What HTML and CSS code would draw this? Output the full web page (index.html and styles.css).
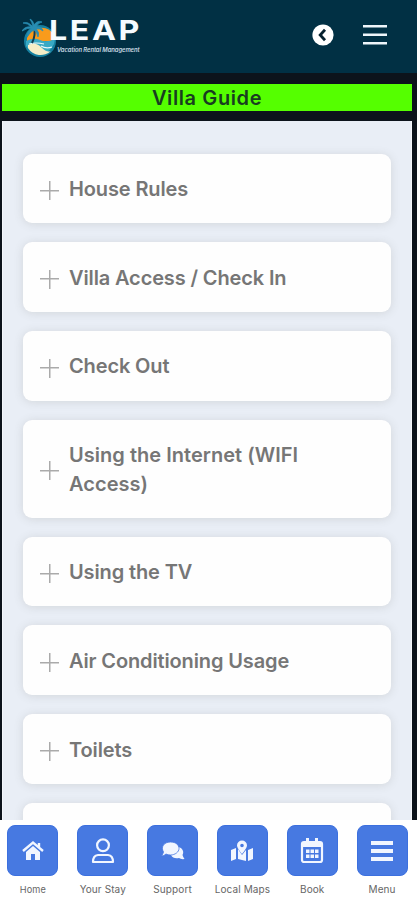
FILE: index.html
```html
<!DOCTYPE html>
<html lang="en">
<head>
<meta charset="utf-8">
<meta name="viewport" content="width=device-width, initial-scale=1">
<title>Villa Guide</title>
<link rel="stylesheet" href="styles.css">
</head>
<body>
<div class="app">
  <header class="header">
    <div class="brand">
      <svg class="emblem" viewBox="0 0 34 42" aria-hidden="true">
        <circle cx="18" cy="24" r="16" fill="#1680a0"/>
        <path d="M5 21A15 15 0 0 1 32 18V24H5Z" fill="#f99b1c"/>
        <path d="M4 24Q12 20 18 23T33 22A15.500 15.500 0 0 1 4 29Z" fill="#38a9c4"/>
        <path d="M6 28Q13 24 19 30T29 34A15 15 0 0 1 6 31Z" fill="#f5edc7"/>
        <path d="M7 27Q14 25 22 27M19 29Q24 32 30 30" fill="none" stroke="#e8f8fa" stroke-width="1.200"/>
        <path d="M12 10Q14 18 10 26" fill="none" stroke="#123d50" stroke-width="2"/>
        <path d="M11 10Q6 4 1 6Q6 6 9 10Q3 9 0 14Q6 10 10 12Q5 14 5 20Q9 14 12 13Q15 15 16 20Q18 15 14 12Q18 11 21 14Q20 9 14 10Q17 5 20 5Q15 3 12 8Q11 3 8 2Q10 5 11 10Z" fill="#288db3" stroke="#288db3" stroke-width=".8"/>
      </svg>
      <div class="wordmark"><div class="name">LEAP</div><div class="tagline">Vacation Rental Management</div></div>
    </div>
    <div class="actions">
      <svg width="22" height="22" viewBox="0 0 22 22"><circle cx="11" cy="11" r="10.600" fill="#fff"/><path d="M13 5.800L8.200 11L13 16.200" fill="none" stroke="#06212f" stroke-width="2.800"/></svg>
      <svg width="26" height="22" viewBox="0 0 26 22"><path d="M1 2.200H25M1 10.700H25M1 19.200H25" stroke="#eef5fa" stroke-width="2.400"/></svg>
    </div>
  </header>
  <main class="frame">
    <h1 class="title">Villa Guide</h1>
    <div class="list">
      <div class="card"><i class="plus"></i><span class="text">House Rules</span></div>
      <div class="card"><i class="plus"></i><span class="text">Villa Access / Check In</span></div>
      <div class="card"><i class="plus"></i><span class="text">Check Out</span></div>
      <div class="card"><i class="plus"></i><span class="text wide">Using the Internet (WIFI<br>Access)</span></div>
      <div class="card"><i class="plus"></i><span class="text">Using the TV</span></div>
      <div class="card"><i class="plus"></i><span class="text">Air Conditioning Usage</span></div>
      <div class="card"><i class="plus"></i><span class="text">Toilets</span></div>
      <div class="card"></div>
    </div>
  </main>
  <nav class="nav">
    <a class="item"><span class="tile"><svg width="24" height="24" viewBox="0 0 24 24"><path d="M2 12L12 3.500L22 12M18 4V9" fill="none" stroke="#f1f6ff" stroke-width="2.400"/><path d="M12 7L19 13V21H14V15H10V21H5V13Z" fill="#f1f6ff"/></svg></span><span class="label small">Home</span></a>
    <a class="item"><span class="tile"><svg width="24" height="28" viewBox="0 0 24 28"><circle cx="12" cy="8.300" r="5.900" fill="none" stroke="#f1f6ff" stroke-width="2.200"/><path d="M7 18H17Q22 18.500 22 25H2Q2 18.500 7 18Z" fill="none" stroke="#f1f6ff" stroke-width="2.200" stroke-linejoin="round"/></svg></span><span class="label">Your Stay</span></a>
    <a class="item"><span class="tile"><svg width="24" height="24" viewBox="0 0 24 24"><path d="M14 8C20 7 24 12 21.500 16Q22 18 23.500 20Q20 20.500 18 19Q12 20 10 16Z" fill="#f1f6ff"/><path d="M9.500 3C15 3 18 6 18 9.500S14 16 9.500 16Q7 16 5 15Q3 17 .5 17Q2 15 2.500 13C-.5 8 3 3 9.500 3Z" fill="#f1f6ff" stroke="#4779e1" stroke-width=".8"/></svg></span><span class="label">Support</span></a>
    <a class="item"><span class="tile"><svg width="24" height="24" viewBox="0 0 24 24"><path d="M1 11L6 9V20L1 22ZM8 10L12 16L16 11V22L8 20ZM18 11L23 9V20L18 22Z" fill="#f1f6ff"/><path fill-rule="evenodd" d="M12 1.500A5 5 0 0 1 17 6.500C17 9 12 15 12 15S7 9 7 6.500A5 5 0 0 1 12 1.500M12 4.700A1.800 1.800 0 1 0 12 8.300A1.800 1.800 0 1 0 12 4.700Z" fill="#f1f6ff"/></svg></span><span class="label">Local Maps</span></a>
    <a class="item"><span class="tile"><svg width="24" height="26" viewBox="0 0 24 26"><rect x="2" y="4" width="20" height="20" rx="2" fill="none" stroke="#f1f6ff" stroke-width="2.200"/><path d="M2 4H22V9H2ZM6 0H9V6H6ZM15 0H18V6H15Z" fill="#f1f6ff"/><path d="M6 11.500H9.500V15H6ZM10.500 11.500H14V15H10.500ZM15 11.500H18.500V15H15ZM6 16.500H9.500V20H6ZM10.500 16.500H14V20H10.500ZM15 16.500H18.500V20H15Z" fill="#f1f6ff"/></svg></span><span class="label">Book</span></a>
    <a class="item"><span class="tile"><svg width="24" height="24" viewBox="0 0 24 24"><path d="M1 4H23M1 12H23M1 20H23" stroke="#f1f6ff" stroke-width="4"/></svg></span><span class="label">Menu</span></a>
  </nav>
</div>
</body>
</html>
```
FILE: styles.css
```css
* { box-sizing: border-box; }
body { margin: 0; font-family: Inter, "Liberation Sans", sans-serif; }
.app { width: 417px; height: 900px; display: flex; flex-direction: column; overflow: hidden; background: #fff; }
.header { height: 73px; flex: none; background: #013044; display: flex; justify-content: space-between; align-items: flex-start; padding: 17px 29px 0 22px; }
.brand { display: flex; }
.emblem { width: 34px; height: 42px; }
.wordmark { margin-left: -7px; color: #f6fbff; white-space: nowrap; }
.name { font: 700 27.500px/26px Inter, sans-serif; letter-spacing: 2.200px; transform: scaleX(1.17); transform-origin: left; }
.tagline { font: italic 600 5.900px/7px Inter, sans-serif; margin: 3px 0 0 8px; letter-spacing: -.08px; color: #c8dbe4; }
.actions { display: flex; gap: 28px; align-items: center; padding-top: 7px; }
.frame { height: 747px; flex: none; background: #0c131b; padding: 11px 5px 0 2px; overflow: hidden; }
.title { height: 27px; margin: 0 0 10px; background: #55ff00; color: #183d20; font-size: 20px; line-height: 28px; font-weight: 600; text-align: center; letter-spacing: .6px; }
.list { height: 699px; overflow: hidden; background: #e9eef6; border: 1px solid #f4f7fb; border-width: 0 1px; padding: 32.500px 20px 0; display: flex; flex-direction: column; gap: 19px; }
.card { flex: none; min-height: 69.800px; padding: 20.900px 17px 19.300px; border-radius: 9px; background: #fefefe; box-shadow: 0 1px 10px rgba(80,80,70,.15); display: flex; align-items: center; gap: 10px; font-size: 20px; line-height: 28.800px; font-weight: 600; color: #767676; }
.text { letter-spacing: -.13px; }
.wide { letter-spacing: .03px; }
.plus { width: 19px; height: 19px; flex: none; margin-top: 2.500px; background: linear-gradient(#aaa,#aaa) center/100% 1.500px no-repeat, linear-gradient(#aaa,#aaa) center/1.500px 100% no-repeat; }
.nav { height: 80px; flex: none; width: 419px; margin-left: -2px; background: #fff; display: grid; grid-template-columns: repeat(6, 1fr); padding-top: 5px; }
.item { display: flex; flex-direction: column; align-items: center; }
.tile { width: 51px; height: 51px; border-radius: 8px; background: #4779e1; border: 1px solid #3c70df; display: flex; align-items: center; justify-content: center; }
.label { margin-top: 6px; font-size: 10px; line-height: 15px; color: #666; white-space: nowrap; letter-spacing: .1px; }
.small { font-size: 9.200px; }
```
